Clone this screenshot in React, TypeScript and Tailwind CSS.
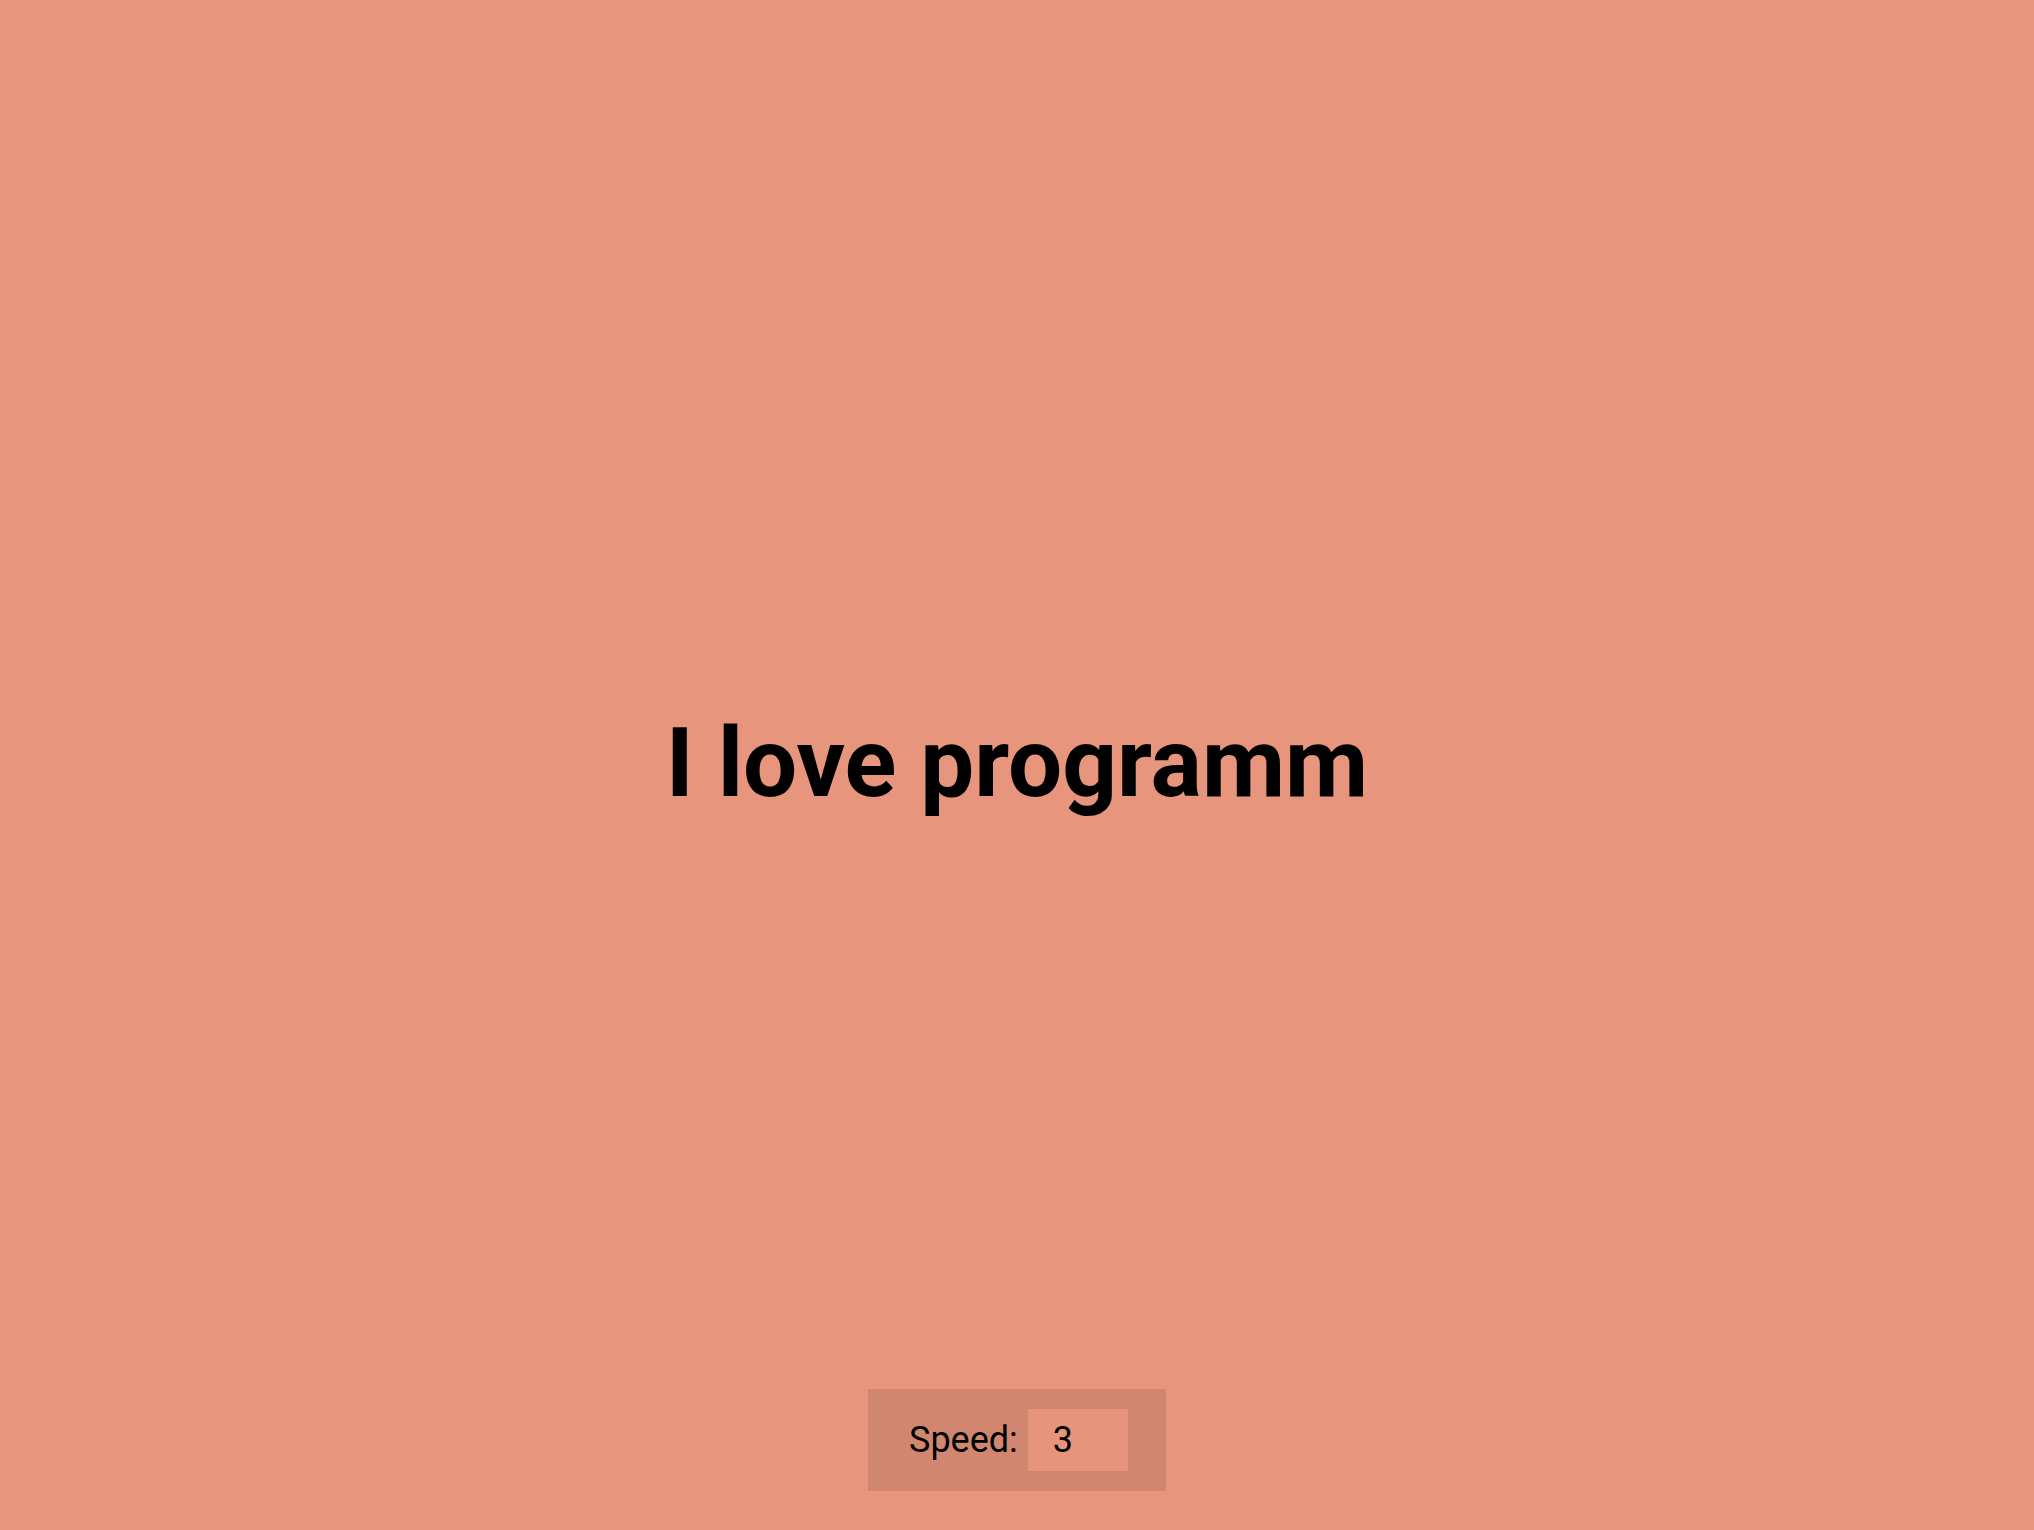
import React from "react";

export default function App() {
  return (
    <div
      className="relative h-screen w-full overflow-hidden bg-[#e7957c] text-black"
      style={{ fontFamily: "Roboto, 'Liberation Sans', sans-serif" }}
    >
      <div className="flex h-full w-full items-center justify-center pb-[3px]">
        <h1 className="text-[96px] font-bold leading-[1.172]">I love programm</h1>
      </div>
      <div className="absolute bottom-[39px] left-1/2 flex h-[102px] w-[298px] -translate-x-1/2 items-center bg-[#d0866f] pl-[41px] pr-[40px]">
        <label className="flex items-center gap-[10px] text-[36px] leading-none">
          <span>Speed:</span>
          <input
            type="text"
            defaultValue="3"
            className="h-[62px] w-[100px] bg-[#e6957c] pl-[25px] text-[36px] text-black outline-none"
            style={{ fontFamily: "Roboto, 'Liberation Sans', sans-serif" }}
          />
        </label>
      </div>
    </div>
  );
}
